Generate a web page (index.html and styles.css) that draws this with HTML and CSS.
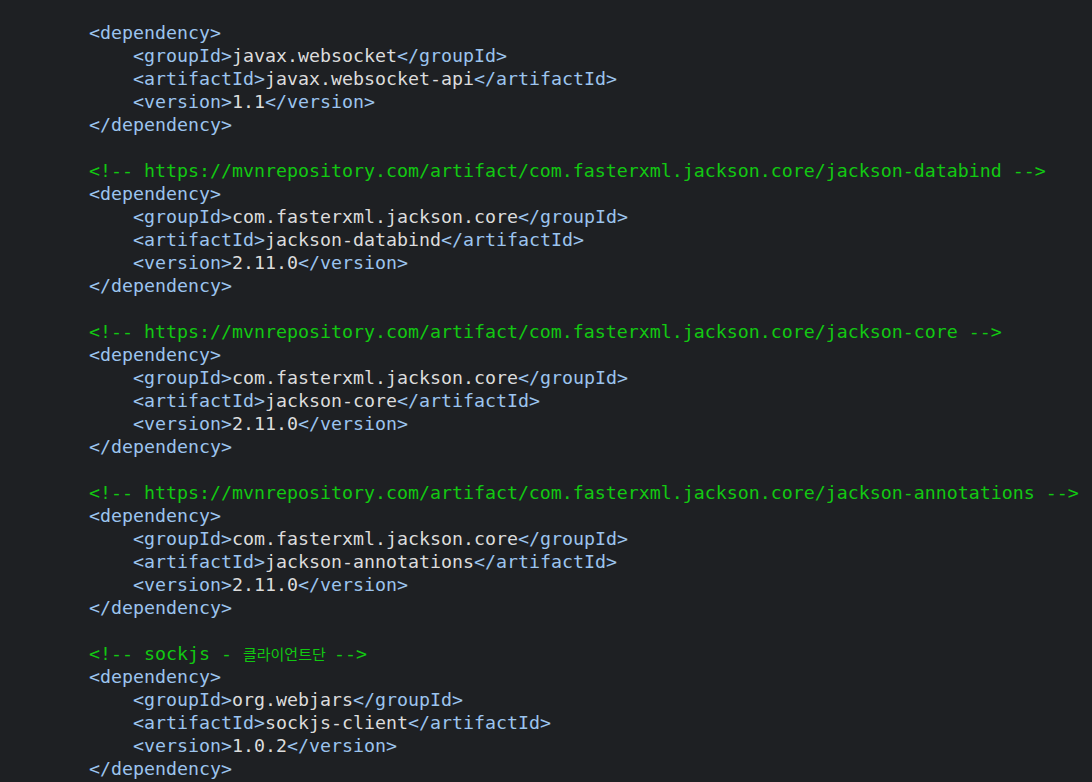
FILE: index.html
```html
<!DOCTYPE html>
<html lang="ko">
<head>
<meta charset="utf-8">
<link rel="stylesheet" href="styles.css">
</head>
<body>
<pre class="code"><span class="t">&lt;dependency&gt;</span>
    <span class="t">&lt;groupId&gt;</span>javax.websocket<span class="t">&lt;/groupId&gt;</span>
    <span class="t">&lt;artifactId&gt;</span>javax.websocket-api<span class="t">&lt;/artifactId&gt;</span>
    <span class="t">&lt;version&gt;</span>1.1<span class="t">&lt;/version&gt;</span>
<span class="t">&lt;/dependency&gt;</span>

<span class="c">&lt;!-- https://mvnrepository.com/artifact/com.fasterxml.jackson.core/jackson-databind --&gt;</span>
<span class="t">&lt;dependency&gt;</span>
    <span class="t">&lt;groupId&gt;</span>com.fasterxml.jackson.core<span class="t">&lt;/groupId&gt;</span>
    <span class="t">&lt;artifactId&gt;</span>jackson-databind<span class="t">&lt;/artifactId&gt;</span>
    <span class="t">&lt;version&gt;</span>2.11.0<span class="t">&lt;/version&gt;</span>
<span class="t">&lt;/dependency&gt;</span>

<span class="c">&lt;!-- https://mvnrepository.com/artifact/com.fasterxml.jackson.core/jackson-core --&gt;</span>
<span class="t">&lt;dependency&gt;</span>
    <span class="t">&lt;groupId&gt;</span>com.fasterxml.jackson.core<span class="t">&lt;/groupId&gt;</span>
    <span class="t">&lt;artifactId&gt;</span>jackson-core<span class="t">&lt;/artifactId&gt;</span>
    <span class="t">&lt;version&gt;</span>2.11.0<span class="t">&lt;/version&gt;</span>
<span class="t">&lt;/dependency&gt;</span>

<span class="c">&lt;!-- https://mvnrepository.com/artifact/com.fasterxml.jackson.core/jackson-annotations --&gt;</span>
<span class="t">&lt;dependency&gt;</span>
    <span class="t">&lt;groupId&gt;</span>com.fasterxml.jackson.core<span class="t">&lt;/groupId&gt;</span>
    <span class="t">&lt;artifactId&gt;</span>jackson-annotations<span class="t">&lt;/artifactId&gt;</span>
    <span class="t">&lt;version&gt;</span>2.11.0<span class="t">&lt;/version&gt;</span>
<span class="t">&lt;/dependency&gt;</span>

<span class="c">&lt;!-- sockjs - <span class="ko">클라이언트단 </span>--&gt;</span>
<span class="t">&lt;dependency&gt;</span>
    <span class="t">&lt;groupId&gt;</span>org.webjars<span class="t">&lt;/groupId&gt;</span>
    <span class="t">&lt;artifactId&gt;</span>sockjs-client<span class="t">&lt;/artifactId&gt;</span>
    <span class="t">&lt;version&gt;</span>1.0.2<span class="t">&lt;/version&gt;</span>
<span class="t">&lt;/dependency&gt;</span></pre>
</body>
</html>
```
FILE: styles.css
```css
html, body {
  margin: 0;
  padding: 0;
  background: #1e2023;
  height: 100%;
  overflow: hidden;
}
.code {
  margin: 0;
  padding: 21px 0 0 89px;
  font-family: "DejaVu Sans Mono", "Liberation Mono", monospace;
  font-size: 18.27px;
  line-height: 23px;
  color: #dcdcdc;
  white-space: pre;
}
.t {
  color: #9cc4ee;
}
.c {
  color: #12c812;
}
.ko {
  font-family: "Noto Sans CJK KR", sans-serif;
  font-size: 15px;
  padding-right: 4px;
}
```
